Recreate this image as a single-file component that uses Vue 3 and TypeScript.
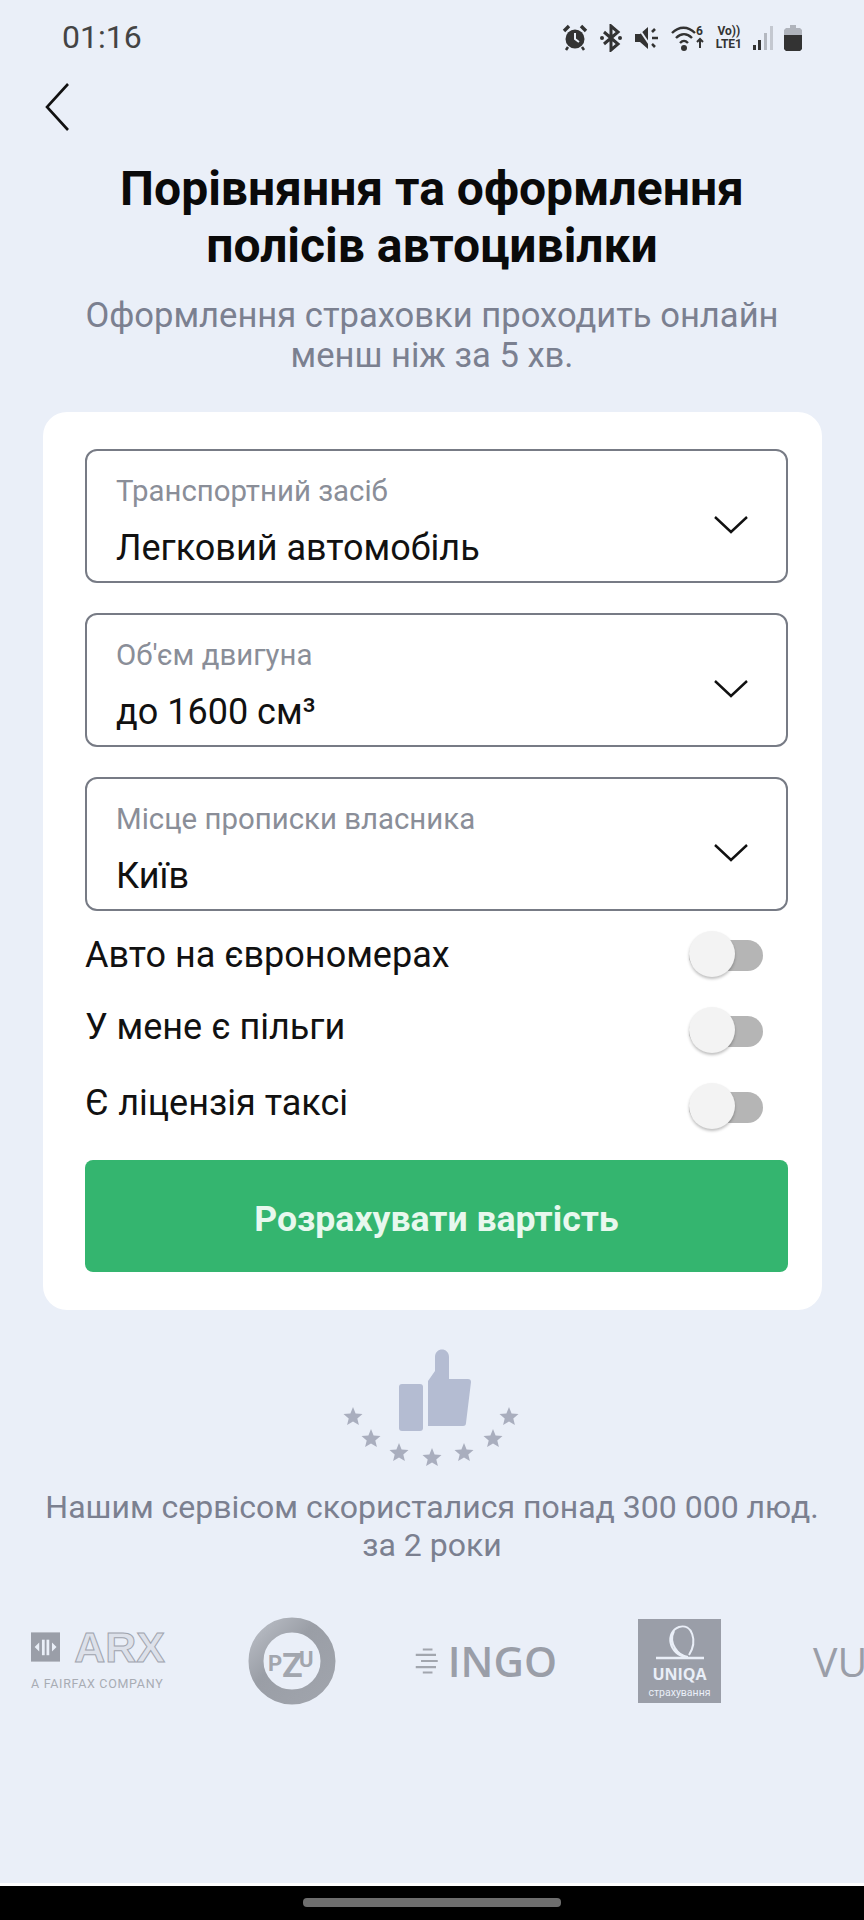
<template>
  <div class="page">
    <div class="status-bar">
      <span class="time">01:16</span>
      <div class="status-icons">
        <svg class="ic" width="26" height="28" viewBox="0 0 26 28">
          <circle cx="13" cy="15" r="9.5" fill="#333" />
          <path d="M2 7l5-5M24 7l-5-5" stroke="#333" stroke-width="3.4" />
          <path d="M13 9v6l4 3" stroke="#eaeff8" stroke-width="2" fill="none" />
          <path d="M6 23l-2 3M20 23l2 3" stroke="#333" stroke-width="2.5" />
        </svg>
        <svg class="ic" width="24" height="28" viewBox="0 0 24 28">
          <path d="M5 8l14 12-7 6V2l7 6L5 20" stroke="#333" stroke-width="3" fill="none" />
          <circle cx="3" cy="14" r="2" fill="#333" />
          <circle cx="21" cy="14" r="2" fill="#333" />
        </svg>
        <svg class="ic" width="26" height="28" viewBox="0 0 26 28">
          <path d="M1 10h5l8-7v22l-8-7H1z" fill="#333" />
          <path d="M18 8l3-3M18 14h6M18 20l3 3" stroke="#333" stroke-width="2.6" />
          <path d="M3 2l17 25" stroke="#eaeff8" stroke-width="2" />
        </svg>
        <svg class="ic wifi" width="34" height="28" viewBox="0 0 34 28">
          <path d="M1 9c7-7 16-7 23 0M5 14c5-5 11-5 16 0M9 19c3-3 5-3 8 0" stroke="#333" stroke-width="2.4" fill="none" />
          <circle cx="13" cy="24" r="3" fill="#333" />
          <text x="25" y="11" class="wifi-six">6</text>
          <path d="M29 15v9M26 18l3-3 3 3" stroke="#333" stroke-width="2" fill="none" />
        </svg>
        <div class="lte">
          <span>Vo))</span>
          <span>LTE1</span>
        </div>
        <svg class="ic signal" width="20" height="26" viewBox="0 0 20 26">
          <rect x="0" y="20" width="3" height="5" fill="#333" />
          <rect x="5" y="15" width="3" height="10" fill="#333" />
          <rect x="11" y="8" width="3" height="17" fill="#b4b8c0" />
          <rect x="17" y="1" width="3" height="24" fill="#c4c8d0" />
        </svg>
        <svg class="ic" width="18" height="26" viewBox="0 0 18 26">
          <path d="M6 0h6v3h4l2 2v19l-2 2H2l-2-2V5l2-2h4z" fill="#b0b4bc" />
          <path d="M0 10h18v14l-2 2H2l-2-2z" fill="#333" />
        </svg>
      </div>
    </div>

    <div class="back-row">
      <svg width="24" height="48" viewBox="0 0 24 48">
        <path d="M23 1L2 24l21 23" stroke="#111" stroke-width="2.6" fill="none" />
      </svg>
    </div>

    <h1 class="title">Порівняння та оформлення<br />полісів автоцивілки</h1>
    <p class="subtitle">Оформлення страховки проходить онлайн<br />менш ніж за 5 хв.</p>

    <div class="card">
      <div v-for="field in fields" :key="field.label" class="field">
        <div class="field-label">{{ field.label }}</div>
        <div class="field-value">{{ field.value }}</div>
        <svg class="chevron" width="34" height="18" viewBox="0 0 34 18">
          <path d="M1 1l16 15L33 1" stroke="#111" stroke-width="2.4" fill="none" />
        </svg>
      </div>

      <div class="options">
        <div v-for="opt in options" :key="opt" class="option">
          <span class="option-label">{{ opt }}</span>
          <span class="toggle"><span class="knob"></span></span>
        </div>
      </div>

      <button class="submit">Розрахувати вартість</button>
    </div>

    <svg class="thumb" width="220" height="140" viewBox="0 0 220 140">
      <rect x="79" y="53" width="24" height="47" rx="3" fill="#b4bcd2" />
      <path
        d="M108 95V50l7-10V26c0-10 14-10 14 0v22h19c2 0 3 1 3 3l-5 41c0 2-1 3-3 3z"
        fill="#b4bcd2"
      />
      <polygon v-for="(pts, i) in stars" :key="i" :points="pts" fill="#a9aebe" />
    </svg>

    <p class="caption">Нашим сервісом скористалися понад 300 000 люд.<br />за 2 роки</p>

    <div class="logos">
      <div class="logo-arx">
        <div class="arx-top">
          <svg width="32" height="32" viewBox="0 0 32 32">
            <rect width="32" height="32" fill="#9a9ea8" />
            <path d="M4 16l5-5v10zM28 16l-5-5v10z" fill="#eaeff8" />
            <rect x="12" y="8" width="3" height="17" fill="#eaeff8" />
            <rect x="17" y="8" width="3" height="17" fill="#eaeff8" />
          </svg>
          <span class="arx-name">ARX</span>
        </div>
        <div class="arx-sub">A FAIRFAX COMPANY</div>
      </div>

      <svg class="logo-pzu" width="90" height="88" viewBox="0 0 90 88">
        <defs>
          <linearGradient id="pzu-ring" x1="0" y1="0" x2="1" y2="1">
            <stop offset="0" stop-color="#b8bcc4" />
            <stop offset="0.4" stop-color="#9a9ea6" />
            <stop offset="1" stop-color="#a0a4ac" />
          </linearGradient>
        </defs>
        <circle cx="45" cy="44" r="36" fill="none" stroke="url(#pzu-ring)" stroke-width="15" />
        <text x="21" y="54" class="pzu-text">P</text>
        <text x="35" y="60" class="pzu-z">Z</text>
        <text x="52" y="50" class="pzu-text">U</text>
      </svg>

      <div class="logo-ingo">
        <svg width="27" height="30" viewBox="0 0 27 30">
          <path d="M10 2h11M2 8h23M8 15h19M2 22h23M10 28h11" stroke="#a2a6ae" stroke-width="2.4" />
        </svg>
        <span>INGO</span>
      </div>

      <div class="logo-uniqa">
        <svg width="52" height="38" viewBox="0 0 52 38">
          <path d="M33 33C14 31 11 8 25 3c13-4 19 14 10 28M20 7c-6 12 4 25 14 26" stroke="#eaeff8" stroke-width="2" fill="none" />
          <path d="M2 34h48" stroke="#eaeff8" stroke-width="2.4" />
        </svg>
        <span class="uniqa-name">UNIQA</span>
        <span class="uniqa-sub">страхування</span>
      </div>

      <span class="logo-vu">VU</span>
    </div>

    <div class="nav-bar"><span class="pill"></span></div>
  </div>
</template>

<script setup lang="ts">
const fields = [
  { label: 'Транспортний засіб', value: 'Легковий автомобіль' },
  { label: "Об'єм двигуна", value: 'до 1600 см³' },
  { label: 'Місце прописки власника', value: 'Київ' }
];

const options = ['Авто на єврономерах', 'У мене є пільги', 'Є ліцензія таксі'];

// centres of the stars under the thumb
const starCentres = [
  [33, 86],
  [51, 108],
  [79, 122],
  [112, 127],
  [144, 122],
  [173, 108],
  [189, 86]
];

const starPoints = (cx: number, cy: number, r: number) => {
  const pts: string[] = [];
  for (let i = 0; i < 10; i++) {
    const rad = i % 2 === 0 ? r : r * 0.45;
    const a = (Math.PI / 5) * i - Math.PI / 2;
    pts.push(`${(cx + rad * Math.cos(a)).toFixed(1)},${(cy + rad * Math.sin(a)).toFixed(1)}`);
  }
  return pts.join(' ');
};

const stars = starCentres.map(([x, y]) => starPoints(x, y, 10));
</script>

<style>
body {
  margin: 0;
  background: #eaeff8;
}
</style>

<style scoped>
.page {
  width: 864px;
  height: 1920px;
  background: #eaeff8;
  font-family: Roboto, 'Liberation Sans', sans-serif;
  display: flex;
  flex-direction: column;
  overflow: hidden;
}

.status-bar {
  height: 74px;
  display: flex;
  align-items: center;
  justify-content: space-between;
  padding: 0 62px 0 62px;
  box-sizing: border-box;
}

.time {
  font-size: 32px;
  color: #444;
}

.status-icons {
  display: flex;
  align-items: center;
  gap: 11px;
  padding-top: 2px;
}

.ic {
  display: block;
}

.wifi-six {
  font: 700 12px Roboto, sans-serif;
  fill: #333;
}

.lte {
  display: flex;
  flex-direction: column;
  font: 700 12px/13px Roboto, sans-serif;
  color: #333;
  text-align: center;
}

.back-row {
  height: 86px;
  padding: 9px 0 0 45px;
  box-sizing: border-box;
}

.title {
  margin: 0;
  font-size: 48px;
  line-height: 57px;
  font-weight: 700;
  text-align: center;
  color: #0a0a0a;
}

.subtitle {
  margin: 21px 0 0;
  font-size: 34.6px;
  line-height: 40px;
  text-align: center;
  color: #7b8090;
}

.card {
  margin: 37px 42px 0 43px;
  height: 898px;
  box-sizing: border-box;
  padding: 37px 34px 0 42px;
  background: #fff;
  border-radius: 24px;
}

.field {
  position: relative;
  height: 134px;
  box-sizing: border-box;
  margin-bottom: 30px;
  padding: 23px 29px 0;
  border: 2px solid #777b85;
  border-radius: 12px;
}

.field-label {
  font-size: 29.4px;
  line-height: 34px;
  color: #8a8e98;
}

.field-value {
  margin-top: 18px;
  font-size: 36px;
  line-height: 44px;
  color: #111;
}

.chevron {
  position: absolute;
  right: 38px;
  top: 65px;
}

.options {
  margin-top: -24px;
}

.option {
  display: flex;
  justify-content: space-between;
  align-items: center;
  height: 76px;
  font-size: 36px;
  color: #111;
}

/* the lower two labels sit a little above their switches */
.option + .option .option-label {
  margin-bottom: 8px;
}

.toggle {
  position: relative;
  display: block;
  width: 74px;
  height: 31px;
  margin-right: 25px;
  border-radius: 16px;
  background: #b5b5b5;
}

.knob {
  position: absolute;
  left: 0;
  top: -9px;
  width: 46px;
  height: 46px;
  border-radius: 50%;
  background: #f3f3f3;
  box-shadow: 0 2px 3px rgba(0, 0, 0, 0.25);
}

.submit {
  display: block;
  width: 703px;
  height: 112px;
  margin-top: 15px;
  padding: 6px 0 0;
  border: none;
  border-radius: 8px;
  background: #34b56f;
  color: #e8f8ee;
  font-family: inherit;
  font-size: 35.6px;
  font-weight: 700;
}

.thumb {
  display: block;
  margin: 21px 0 0 320px;
  flex-shrink: 0;
}

.caption {
  margin: 17px 0 0;
  font-size: 32px;
  line-height: 38px;
  text-align: center;
  color: #7b8090;
}

.logos {
  display: flex;
  align-items: center;
  height: 90px;
  margin-top: 52px;
  padding-left: 31px;
  color: #9a9ea8;
  white-space: nowrap;
}

.logos > * {
  flex-shrink: 0;
}

.logo-arx {
  width: 134px;
  margin-right: 82px;
}

.arx-top {
  display: flex;
  align-items: center;
  gap: 14px;
}

.arx-name {
  font: 700 43px/32px 'Liberation Sans', sans-serif;
  color: #dde1ea;
  -webkit-text-stroke: 1px #a0a4ae;
}

.arx-sub {
  margin-top: 13px;
  font-size: 12.5px;
  letter-spacing: 0.7px;
  color: #a8acb4;
}

.logo-pzu {
  margin-right: 77px;
}

.pzu-text {
  font: 700 22px Roboto, sans-serif;
  fill: #a2a6ae;
}

.pzu-z {
  font: 700 34px Roboto, sans-serif;
  fill: #a2a6ae;
}

.logo-ingo {
  display: flex;
  align-items: center;
  gap: 10px;
  width: 143px;
  margin-right: 81px;
  font: 600 42px/1 'Open Sans', sans-serif;
  color: #9a9ea8;
}

.logo-uniqa {
  display: flex;
  flex-direction: column;
  align-items: center;
  box-sizing: border-box;
  width: 83px;
  height: 84px;
  margin-right: 92px;
  padding-top: 5px;
  background: #9a9ea8;
  color: #eaeff8;
}

.uniqa-name {
  margin-top: 2px;
  font: 700 16px/20px 'Open Sans', sans-serif;
}

.uniqa-sub {
  margin-top: 3px;
  font-size: 10.5px;
  line-height: 12px;
}

.logo-vu {
  font: 400 41px/1 'Open Sans', sans-serif;
  color: #9a9ea8;
}

.nav-bar {
  margin-top: auto;
  height: 37px;
  box-sizing: border-box;
  padding-top: 12px;
  display: flex;
  justify-content: center;
  background: #000;
  border-top: 3px solid #fff;
  flex-shrink: 0;
}

.pill {
  display: block;
  width: 258px;
  height: 9px;
  border-radius: 4px;
  background: #6e6e6e;
}
</style>
